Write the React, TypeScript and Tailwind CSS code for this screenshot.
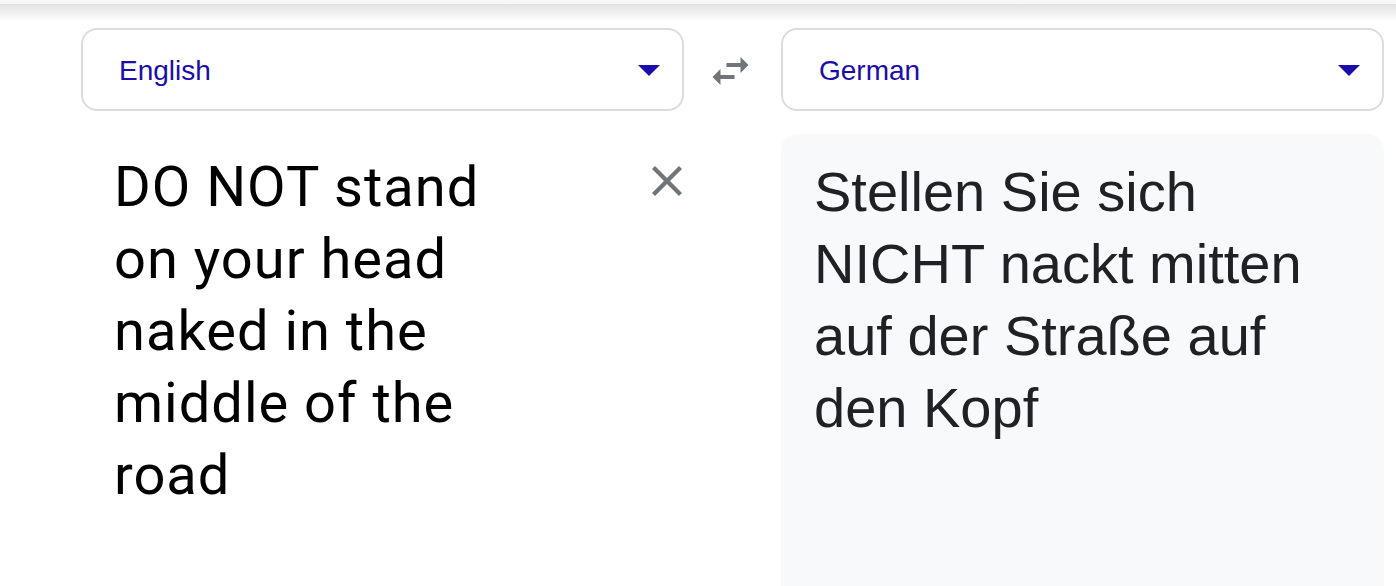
export default function App() {
  return (
    <div className="w-full h-[586px] overflow-hidden bg-white flex flex-col">
      {/* shadow from the header above */}
      <div className="h-[4px] bg-[#f7f7f7]" />
      <div className="h-[18px] bg-gradient-to-b from-[#e2e2e2] to-white" />

      <div className="flex flex-1 pl-[81px] pt-[6px] min-h-0">
        {/* source side */}
        <div className="w-[603px] flex flex-col">
          <LangSelect label="English" />
          <div className="flex pt-[40px]">
            <div
              className="pl-[33px] w-[440px] text-[56px] leading-[72px] tracking-[1px] text-black"
              style={{ fontFamily: "Roboto, 'Noto Sans', sans-serif" }}
            >
              DO NOT stand on your head naked in the middle of the road
            </div>
            <div className="flex-1" />
            <button className="mt-[15px] mr-[2px] h-[30px] w-[30px]">
              <svg viewBox="5 5 14 14" className="h-[30px] w-[30px]" fill="#70757a">
                <path d="M19 6.41L17.59 5 12 10.59 6.41 5 5 6.41 10.59 12 5 17.59 6.41 19 12 13.41 17.59 19 19 17.59 13.41 12z" />
              </svg>
            </button>
          </div>
        </div>

        {/* swap */}
        <div className="w-[97px] h-[83px] flex items-center justify-center">
          <svg viewBox="3 5 18 14" className="w-[37px] h-[28px] mr-[5px] mt-[2px]" fill="#70757a">
            <path d="M6.99 11L3 15l3.99 4v-3H14v-2H6.99v-3zM21 9l-3.99-4v3H10v2h7.01v3L21 9z" />
          </svg>
        </div>

        {/* target side */}
        <div className="w-[603px] flex flex-col">
          <LangSelect label="German" />
          <div
            className="mt-[23px] flex-1 rounded-t-[16px] bg-[#f8f9fa] pt-[22px] pl-[33px] pr-[30px] text-[56px] leading-[72px] text-[#202124]"
            style={{ fontFamily: "'Liberation Sans', Arial, sans-serif" }}
          >
            Stellen Sie sich NICHT nackt mitten auf der Straße auf den Kopf
          </div>
        </div>
      </div>
    </div>
  );
}

function LangSelect({ label }: { label: string }) {
  return (
    <div className="h-[83px] rounded-[16px] border-2 border-[#dadce0] flex items-center pl-[36px] pr-[22px]">
      <span
        className="flex-1 text-[28px] text-[#1a0dab] pt-[2px]"
        style={{ fontFamily: "'Liberation Sans', Arial, sans-serif" }}
      >
        {label}
      </span>
      <svg viewBox="0 0 22 11" className="w-[22px] h-[11px] mt-[2px]" fill="#1a0dab">
        <path d="M0 0h22L11 11z" />
      </svg>
    </div>
  );
}
